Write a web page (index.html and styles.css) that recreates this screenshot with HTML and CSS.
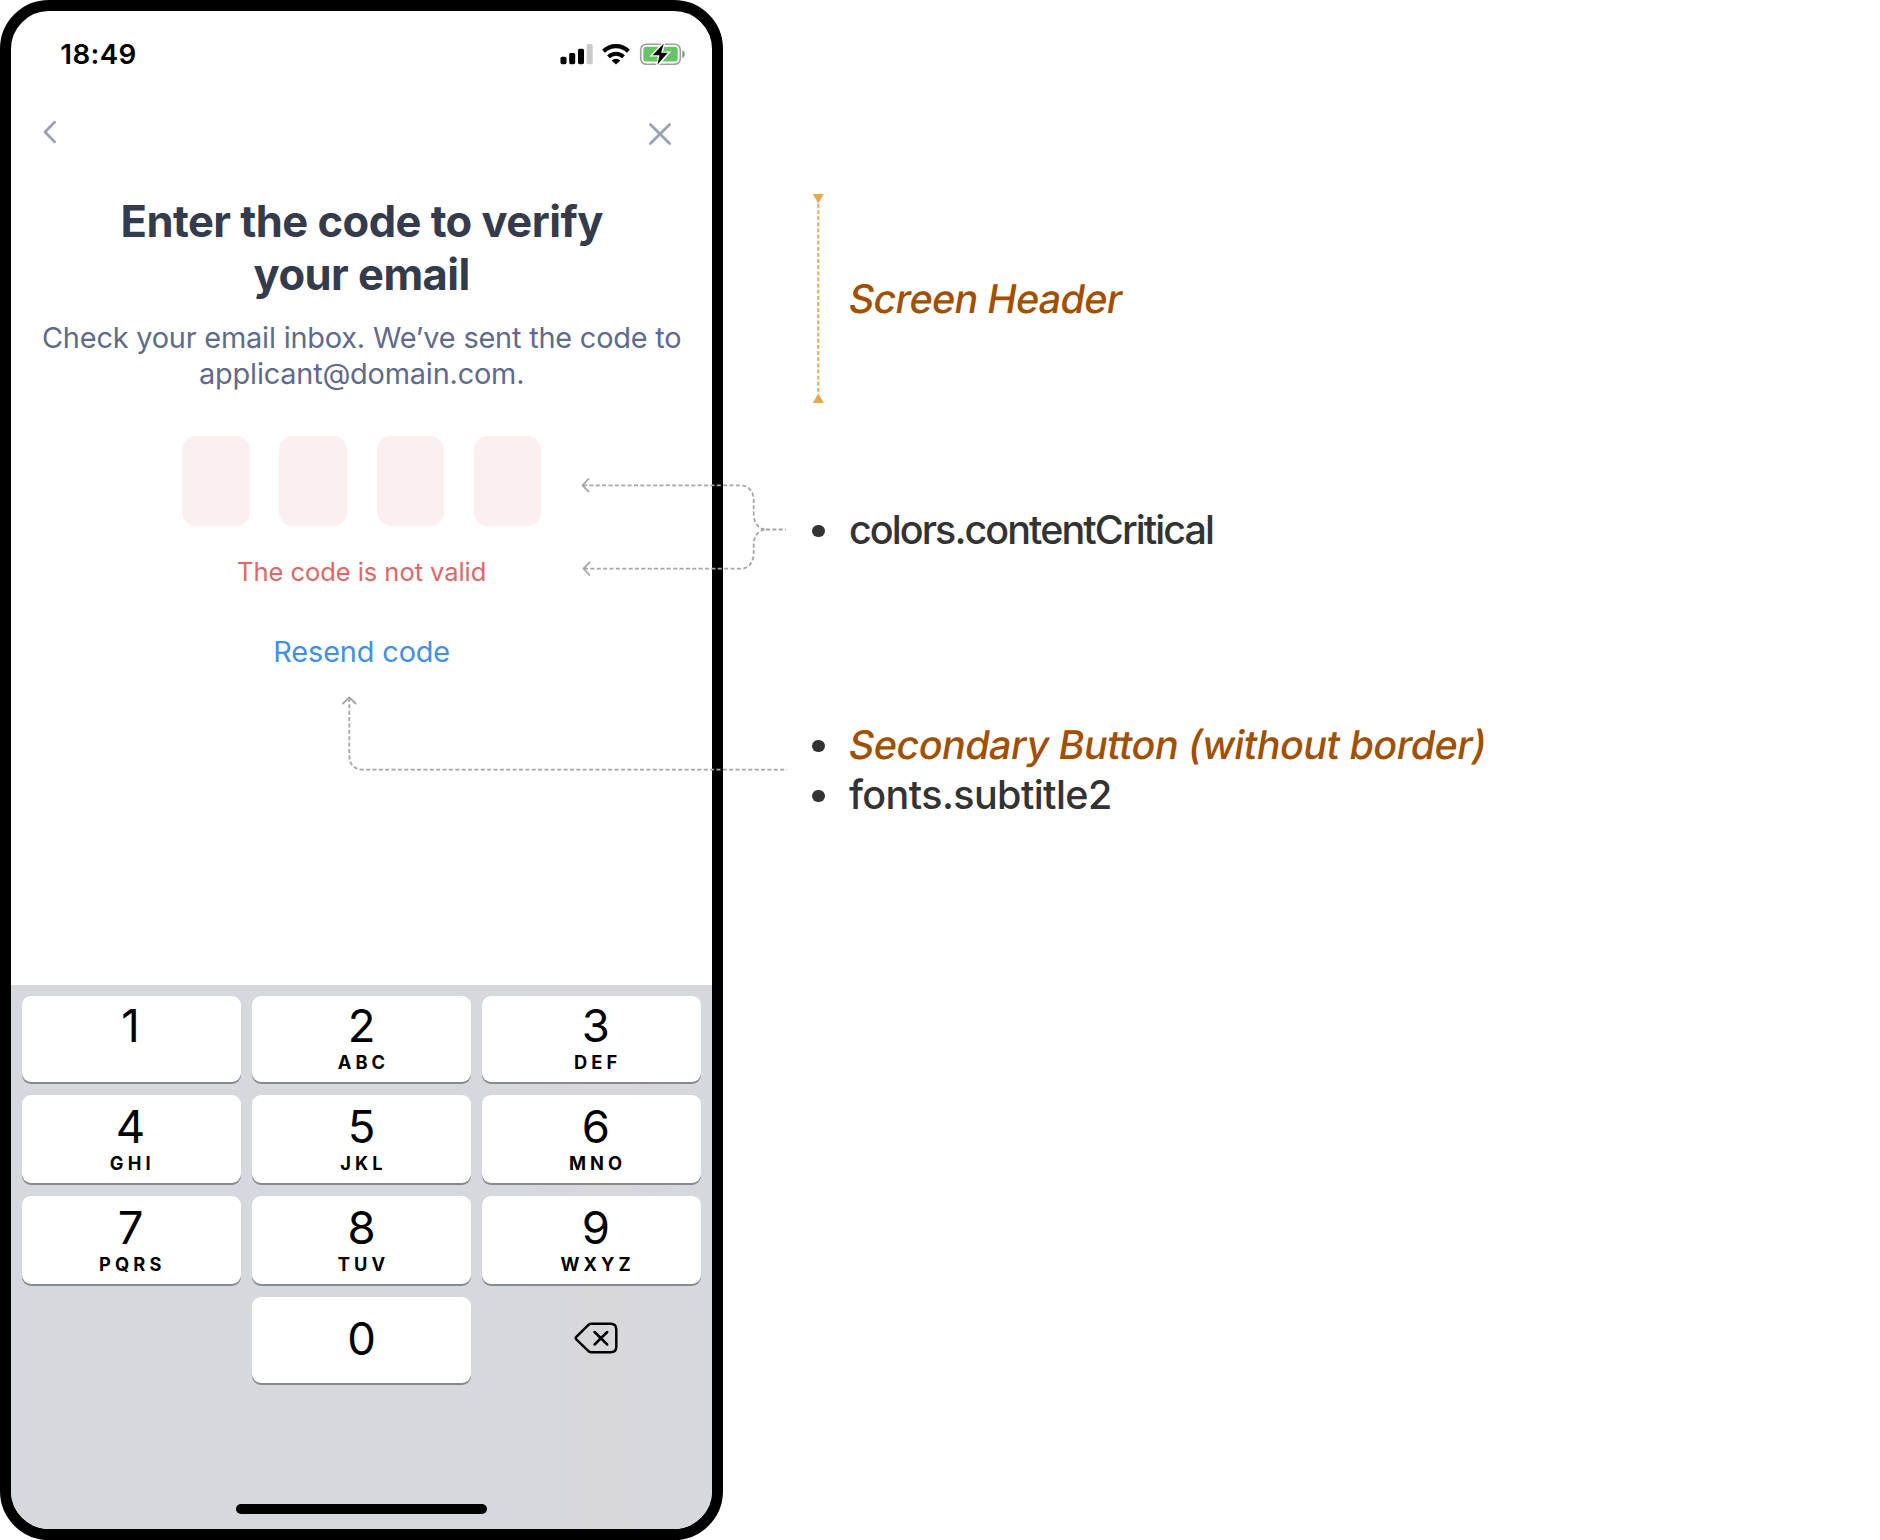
FILE: index.html
```
<!DOCTYPE html>
<html lang="en">
<head>
<meta charset="utf-8">
<title>Email verification</title>
<link rel="stylesheet" href="styles.css">
</head>
<body>
<main class="board">
  <section class="phone">
    <header class="status">
      <span class="status-time">18:49</span>
      <svg class="status-icons" width="126" height="24" viewBox="560 42 126 24">
        <rect x="560.5" y="56.7" width="6" height="7.5" rx="1.6"/>
        <rect x="569.2" y="53" width="6" height="11.2" rx="1.6"/>
        <rect x="578" y="48.7" width="6" height="15.5" rx="1.6"/>
        <rect x="586.7" y="44" width="6" height="20.2" rx="1.6" fill="#cbcbcb"/>
        <path d="M603.6 51.2a17.5 17.5 0 0 1 24.8 0" fill="none" stroke="#000" stroke-width="4.2"/>
        <path d="M608.5 56.8a10.5 10.5 0 0 1 15 0" fill="none" stroke="#000" stroke-width="4"/>
        <path d="M611.6 60.5a6.3 6.3 0 0 1 8.8 0L616 64.6z"/>
        <rect x="640.7" y="44.2" width="39.6" height="20" rx="5.5" fill="none" stroke="#a0a0a0" stroke-width="1.6"/>
        <rect x="643.3" y="46.8" width="34.4" height="14.8" rx="3.2" fill="#65c466"/>
        <path d="M682.3 50.5c3.3 1 3.3 6.6 0 7.5z" fill="#8c8c8c"/>
        <path d="M664 42.8L652.5 55.2h7L657.4 65.2 668.4 52.7h-7z" stroke="#fff" stroke-width="2.6"/>
        <path d="M663.8 43.5L652.5 55.2h7L657.4 64.8 667.8 52.7h-6.7z"/>
      </svg>
    </header>
    <nav class="nav">
      <svg class="back" width="16" height="26" viewBox="0 0 16 26"><path d="M11.6 3.3L2 13 11.6 22.7"/></svg>
      <svg width="26" height="26" viewBox="0 0 26 26"><path d="M3.4 3.4L22.6 22.6M22.6 3.4L3.4 22.6"/></svg>
    </nav>
    <h1 class="title">Enter the code to verify<br>your email</h1>
    <p class="subtitle">Check your email inbox. We’ve sent the code to<br>applicant@domain.com.</p>
    <div class="code"><i></i><i></i><i></i><i></i></div>
    <p class="error">The code is not valid</p>
    <a class="resend">Resend code</a>
    <div class="keyboard">
      <div class="keys">
        <div class="key first left"><b>1</b></div>
        <div class="key first"><b>2</b><small>ABC</small></div>
        <div class="key first right"><b>3</b><small>DEF</small></div>
        <div class="key left"><b>4</b><small>GHI</small></div>
        <div class="key"><b>5</b><small>JKL</small></div>
        <div class="key right"><b>6</b><small>MNO</small></div>
        <div class="key left"><b>7</b><small>PQRS</small></div>
        <div class="key"><b>8</b><small>TUV</small></div>
        <div class="key right"><b>9</b><small>WXYZ</small></div>
        <div></div>
        <div class="key zero"><b>0</b></div>
        <div class="erase">
          <svg width="44" height="32" viewBox="574 1322 44 32"><path d="M576.3 1336.8L588.5 1324.8Q589.8 1323.8 591.5 1323.8H610.5Q616.3 1323.8 616.3 1329.5V1346.5Q616.3 1352.3 610.5 1352.3H591.5Q589.8 1352.3 588.5 1351.2L576.3 1339.3Q575 1338 576.3 1336.8zM594.6 1332L607.2 1344.5M607.2 1332L594.6 1344.5"/></svg>
        </div>
      </div>
      <div class="home"></div>
    </div>
  </section>
  <section class="notes">
    <div class="note header-note">
      <svg class="range" width="12" height="210" viewBox="0 0 12 210"><path d="M.8 0h11L6.3 9.5zM.8 209h11L6.3 199.5z" fill="#e5a84e"/><path d="M6.3 10V200" stroke="#e5a84e" stroke-width="2" stroke-dasharray="3.8 2.33"/></svg>
      <em>Screen Header</em>
    </div>
    <ul class="note critical"><li><span>colors.contentCritical</span></li></ul>
    <ul class="note button-note"><li><em class="wide">Secondary Button (without border)</em></li><li><span>fonts.subtitle2</span></li></ul>
  </section>
  <svg class="links" width="800" height="800" viewBox="0 0 800 800">
    <g class="dash">
      <path d="M583 485.3H740C749 485.3 753.7 492 753.7 500V515C753.7 523 759 529.5 766 529.5"/>
      <path d="M584 568.7H740C749 568.7 753.7 562 753.7 553V544C753.7 536 759 529.5 766 529.5"/>
      <path d="M766 529.5H786"/>
      <path d="M349.3 698V755Q349.3 769.7 364 769.7H787"/>
    </g>
    <path d="M588.5 479L582.5 485.3 588.5 491.6M589.5 562.4L583.5 568.7 589.5 575M343 703.5L349.3 697.3 355.6 703.5"/>
  </svg>
</main>
</body>
</html>
```
FILE: styles.css
```
* { box-sizing: border-box; margin: 0; padding: 0; }
body { width: 1880px; height: 1540px; overflow: hidden; background: #fff; font-family: Inter, "Liberation Sans", sans-serif; }
.board { position: relative; display: flex; height: 1540px; }
.phone { display: flex; flex-direction: column; align-items: center; width: 723.4px; height: 1539.5px; border: 11.3px solid #000; border-radius: 49px; overflow: hidden; background: #fff; color: #000; }
.status { display: flex; justify-content: space-between; align-items: center; width: 100%; height: 85px; padding: 0 26px 0 49.3px; }
.status-time { font-size: 27.7px; font-weight: 600; line-height: 40px; letter-spacing: .4px; }
.nav { display: flex; justify-content: space-between; align-items: center; width: 100%; height: 75px; padding: 0 39.3px 0 31.5px; fill: none; stroke: #98a1b8; stroke-width: 2.8; stroke-linecap: round; stroke-linejoin: round; }
.back { margin-bottom: 3.5px; }
.title { margin-top: 24.3px; font-size: 43.5px; font-weight: 700; line-height: 52.7px; letter-spacing: -.54px; text-align: center; color: #343b4c; }
.subtitle { margin-top: 19.5px; font-size: 28.9px; line-height: 35.6px; letter-spacing: -.2px; text-align: center; color: #5f6b8c; white-space: nowrap; }
.code { display: flex; gap: 29.8px; margin-top: 45px; }
.code i { width: 67.5px; height: 90px; border-radius: 14px; background: #fbefef; }
.error { margin-top: 28px; font-size: 25.5px; line-height: 36px; letter-spacing: -.05px; color: #e16664; }
.resend { margin-top: 43.4px; font-size: 28.8px; line-height: 36px; letter-spacing: -.1px; color: #4190e6; }
.keyboard { display: flex; flex-direction: column; align-items: center; width: 100%; height: 543.5px; margin-top: auto; padding-top: 11.3px; background: linear-gradient(90deg, #d5d8dd 72%, #d7d7dc 82%, #d7d7dc 88%, #d5d8dd 96%); }
.keys { display: grid; grid-template-columns: repeat(3, 218.7px); grid-template-rows: 86px 88px 88px 86px; column-gap: 11.2px; row-gap: 13px; }
.key { display: flex; flex-direction: column; align-items: center; padding-top: 3.5px; border-radius: 9px; background: #fff; box-shadow: 0 2px 0 #898a8d; }
.key.first { padding-top: 1.5px; }
.key.left { padding-right: 2.6px; }
.key.right { padding-left: 8.6px; }
.key.zero { padding-top: 13.5px; }
.key b { margin-bottom: -2px; font-size: 45.5px; font-weight: 400; line-height: 56.5px; }
.key small { padding-left: 3.5px; font-size: 18.3px; font-weight: 700; line-height: 20px; letter-spacing: 4.1px; }
.erase { display: flex; justify-content: center; align-items: center; padding: 0 0 4px 9px; fill: none; stroke: #000; stroke-width: 2.5; stroke-linecap: round; stroke-linejoin: round; }
.home { width: 250.5px; height: 9.7px; margin-top: 121px; border-radius: 5px; background: #000; }
.notes { display: flex; flex-direction: column; padding: 194px 0 0 89px; font-size: 39.5px; font-weight: 500; line-height: 50px; color: #333; }
.notes em { margin-left: -1.8px; font-style: normal; letter-spacing: -.72px; color: #a14f00; transform: skewX(-9.4deg); transform-origin: 0 39px; }
.notes em.wide { letter-spacing: -.53px; }
.notes span { letter-spacing: -.6px; }
.header-note { display: flex; align-items: center; gap: 24.2px; height: 210px; }
.note { list-style: none; }
.note li { display: flex; align-items: center; gap: 24px; }
.note li::before { content: ""; width: 12.6px; height: 12.6px; margin-top: 2px; border-radius: 50%; background: #333; }
.notes .critical span { letter-spacing: -1.93px; }
.critical { margin-top: 101px; }
.button-note { margin-top: 165px; }
.links { position: absolute; left: 0; top: 0; fill: none; stroke: #a6a6a6; stroke-width: 1.8; stroke-linecap: round; stroke-linejoin: round; }
.dash { stroke-dasharray: 4 2.37; stroke-linecap: butt; }
```
